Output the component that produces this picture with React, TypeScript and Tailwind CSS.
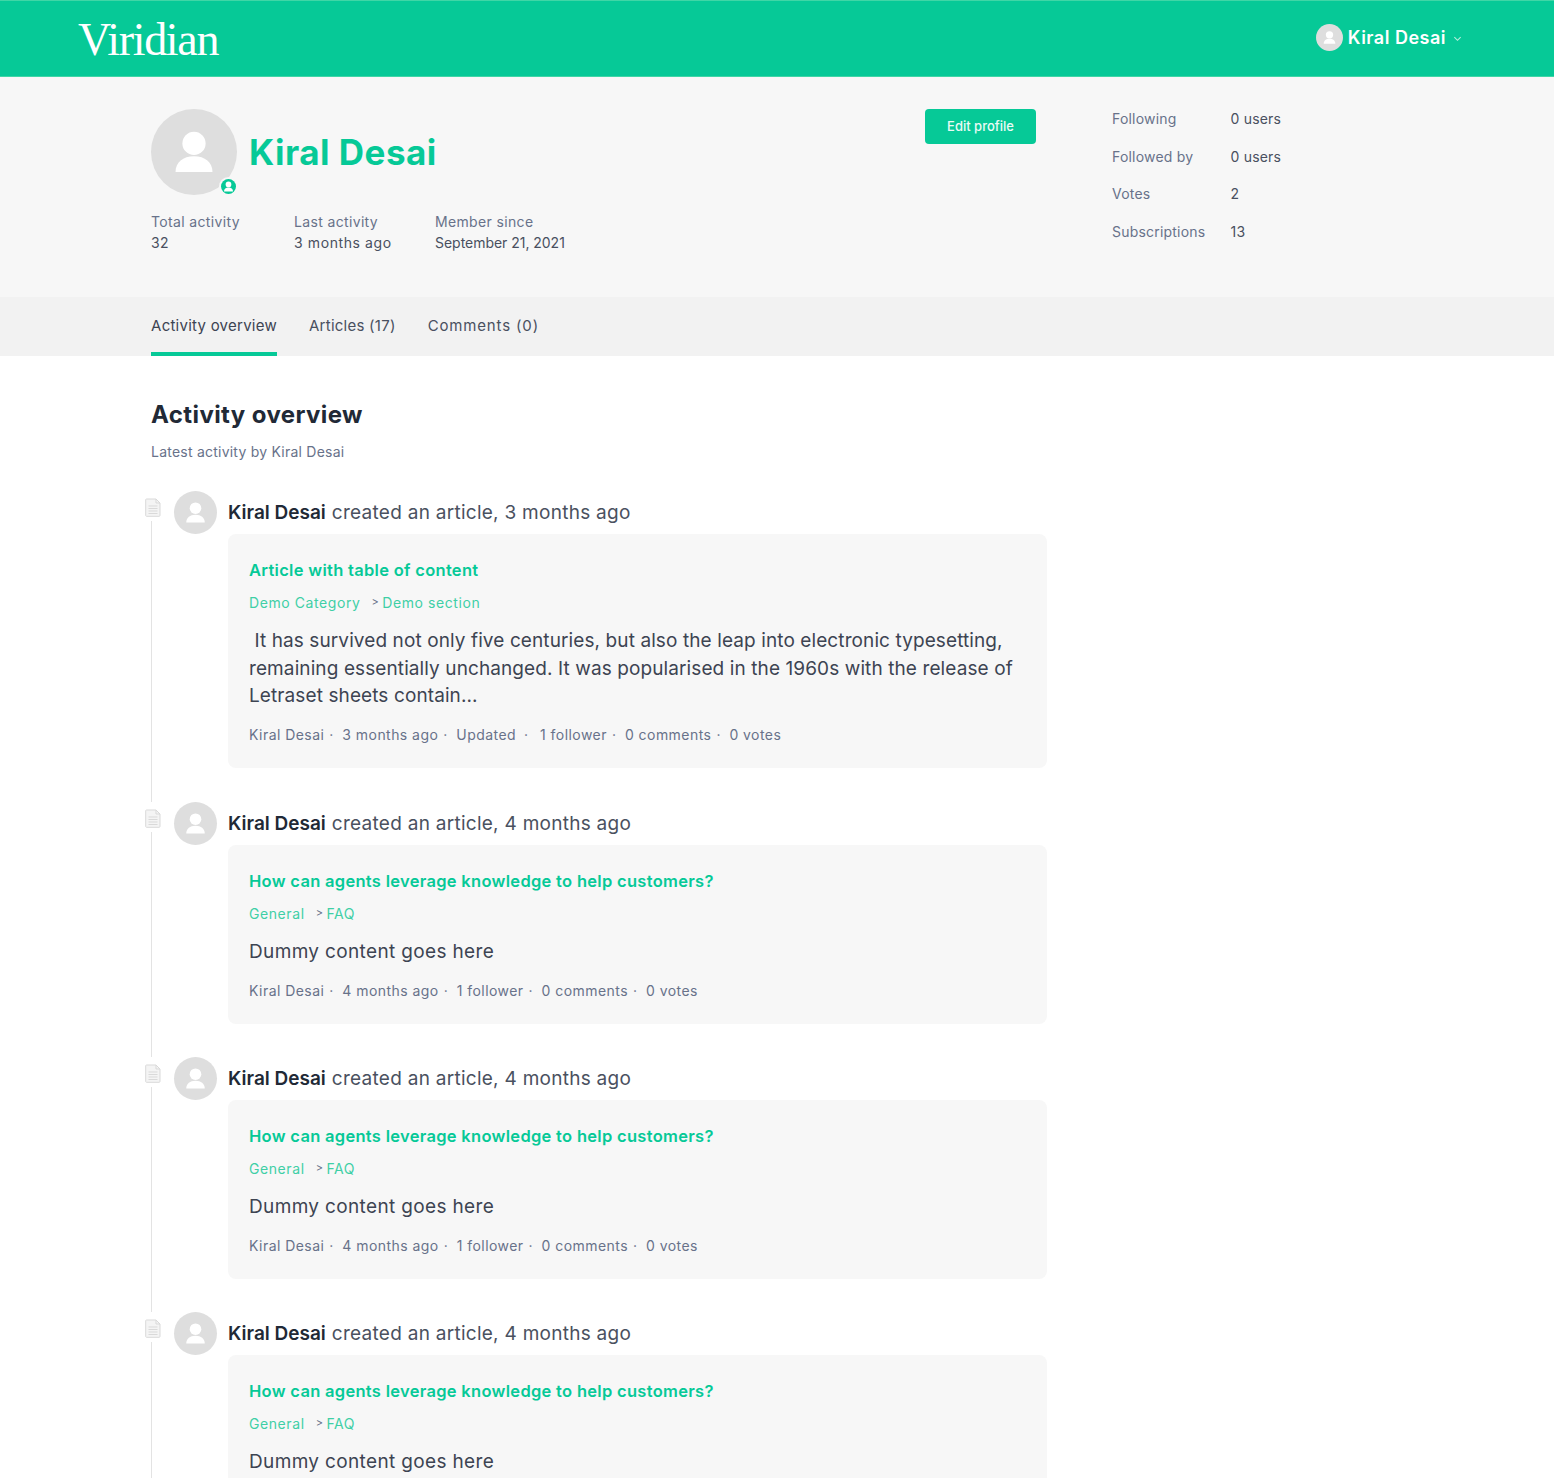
import * as React from "react";

const sans = "font-['Inter','Open_Sans',sans-serif]";

function Person({ className }: { className?: string }) {
  return (
    <svg viewBox="0 0 40 40" className={className} fill="currentColor">
      <circle cx="20" cy="16" r="5.400" />
      <path d="M11.400 29.300c0-4.500 3.500-7.300 8.600-7.300s8.600 2.800 8.600 7.300z" />
    </svg>
  );
}

function DocIcon() {
  return (
    <svg viewBox="0 0 16 19" className="ml-[1px] h-[19px] w-[16px]" fill="none" stroke="#d9d9d9" strokeWidth="1">
      <path d="M1.500 1h9.500l4 4v12.500a.8.8 0 0 1-.8.8H1.500a.8.8 0 0 1-.8-.8V1.800a.8.8 0 0 1 .8-.8z" fill="#f4f4f4" />
      <path d="M11 1v4h4M3.500 8h9M3.500 10.500h9M3.500 13h9M3.500 15.500h9" />
    </svg>
  );
}

interface Activity {
  when: string;
  title: string;
  crumbs: [string, string];
  body: React.ReactNode;
  bodyClass: string;
  meta: string[];
  rowClass: string;
}

const faqMeta = ["Kiral Desai", "4 months ago", "1 follower", "0 comments", "0 votes"];

const activities: Activity[] = [
  {
    when: "3 months ago",
    title: "Article with table of content",
    crumbs: ["Demo Category", "Demo section"],
    body: (
      <>
        &nbsp;It has survived not only five centuries, but also the leap into electronic typesetting,
        remaining essentially unchanged. It was popularised in the 1960s with the release of Letraset
        sheets contain...
      </>
    ),
    bodyClass: "tracking-[0.1px]",
    meta: ["Kiral Desai", "3 months ago", "Updated", "1 follower", "0 comments", "0 votes"],
    rowClass: "h-[311px]",
  },
  {
    when: "4 months ago",
    title: "How can agents leverage knowledge to help customers?",
    crumbs: ["General", "FAQ"],
    body: "Dummy content goes here",
    bodyClass: "tracking-[0.35px]",
    meta: faqMeta,
    rowClass: "h-[255px]",
  },
  {
    when: "4 months ago",
    title: "How can agents leverage knowledge to help customers?",
    crumbs: ["General", "FAQ"],
    body: "Dummy content goes here",
    bodyClass: "tracking-[0.35px]",
    meta: faqMeta,
    rowClass: "h-[255px]",
  },
  {
    when: "4 months ago",
    title: "How can agents leverage knowledge to help customers?",
    crumbs: ["General", "FAQ"],
    body: "Dummy content goes here",
    bodyClass: "tracking-[0.35px]",
    meta: [], // falls below the fold
    rowClass: "h-[255px]",
  },
];

const stats = [
  ["Following", "0 users"],
  ["Followed by", "0 users"],
  ["Votes", "2"],
  ["Subscriptions", "13"],
];

const summary = [
  { label: "Total activity", value: "32", cls: "w-[143px]", valueCls: "" },
  { label: "Last activity", value: "3 months ago", cls: "w-[141px]", valueCls: "tracking-[0.6px]" },
  { label: "Member since", value: "September 21, 2021", cls: "", valueCls: "tracking-[-0.03px]" },
];

export default function App() {
  return (
    <div className={`h-[1478px] overflow-hidden bg-white ${sans}`}>
      {/* Header */}
      <header className="flex h-[77px] items-center justify-between border-y border-t-[#3fd6a6] border-b-[#3fd6a6] bg-[#06c997] pl-[78px] pr-[92px]">
        <span className="mt-[3px] font-['Liberation_Serif',serif] text-[46px] leading-none tracking-[-1.300px] text-white">
          Viridian
        </span>
        <div className="mb-[2px] flex items-center">
          <span className="flex h-[27px] w-[27px] items-center justify-center rounded-full bg-[#dedede] text-white">
            <Person className="h-[27px] w-[27px]" />
          </span>
          <span className="ml-[5px] text-[18px] font-semibold tracking-[0.5px] text-white">Kiral Desai</span>
          <svg viewBox="0 0 10 10" className="ml-[7px] mt-[2px] h-[9px] w-[9px]" fill="none" stroke="#b9efdd" strokeWidth="1.200">
            <path d="M1.500 3.500 5 7l3.500-3.500" />
          </svg>
        </div>
      </header>

      {/* Profile */}
      <section className="flex h-[220px] bg-[#f7f7f7] pl-[151px]">
        <div className="w-[774px] pt-[32px]">
          <div className="flex items-center">
            <div className="relative h-[86px] w-[86px] rounded-full bg-[#dedede] text-white">
              <Person className="h-[86px] w-[86px]" />
              <span className="absolute bottom-[1px] right-[1px] flex h-[15px] w-[15px] items-center justify-center rounded-full bg-[#06c997] ring-2 ring-[#f7f7f7]">
                <Person className="h-[21px] w-[21px] shrink-0" />
              </span>
            </div>
            <h1 className="ml-[12px] text-[35px] font-bold tracking-[0.5px] text-[#06c997]">Kiral Desai</h1>
          </div>
          <div className="mt-[16px] flex text-[14px] leading-[21px] tracking-[0.35px]">
            {summary.map((s) => (
              <div key={s.label} className={s.cls}>
                <div className="text-[#68728a]">{s.label}</div>
                <div className={`text-[#49505f] ${s.valueCls}`}>{s.value}</div>
              </div>
            ))}
          </div>
        </div>
        <div className="w-[187px] pt-[32px]">
          <button className="flex h-[35px] w-[111px] items-center justify-center rounded-[4px] bg-[#06c997] text-[13px] font-medium text-[#eafbf6]">
            Edit profile
          </button>
        </div>
        <div className="grid grid-cols-[118.500px_auto] content-start gap-y-[16.700px] pt-[31px] text-[14px] leading-[21px] tracking-[0.2px]">
          {stats.map(([k, v]) => (
            <React.Fragment key={k}>
              <span className="text-[#68728a]">{k}</span>
              <span className="text-[#49505f]">{v}</span>
            </React.Fragment>
          ))}
        </div>
      </section>

      {/* Tabs */}
      <nav className="flex h-[59px] gap-[32px] bg-[#f2f2f2] pl-[151px] text-[15px] text-[#49505f]">
        <a className="flex w-[126px] items-center justify-center whitespace-nowrap border-b-[4px] border-[#06c997] pt-[3px] tracking-[0.25px] text-[#3d4452]">
          Activity overview
        </a>
        <a className="flex items-center pb-[1px] tracking-[0.25px]">Articles (17)</a>
        <a className="flex items-center pb-[1px] tracking-[0.85px]">Comments (0)</a>
      </nav>

      {/* Overview */}
      <main className="pl-[144px] pt-[43px]">
        <div className="pl-[7px]">
          <h2 className="text-[24px] font-bold leading-[32px] tracking-[0.4px] text-[#212936]">Activity overview</h2>
          <p className="mt-[10px] text-[14px] leading-[21px] tracking-[0.23px] text-[#68728a]">Latest activity by Kiral Desai</p>
        </div>
        <div className="mt-[29px] flex flex-col">
          {activities.map((a, i) => (
            <article key={i} className={`flex ${a.rowClass}`}>
              <div className="flex w-[17px] flex-col items-start pt-[7px]">
                <DocIcon />
                <div className="ml-[7px] mt-[4px] w-px flex-1 bg-[#e3e3e3]" />
              </div>
              <div className="ml-[13px] flex h-[43px] w-[43px] shrink-0 items-center justify-center rounded-full bg-[#dedede] text-white">
                <Person className="h-[43px] w-[43px]" />
              </div>
              <div className="ml-[11px] w-[819px]">
                <div className="flex h-[43px] items-center whitespace-pre pt-[2px] text-[19px] tracking-[0.27px] text-[#4a5160]">
                  <span className="mr-[6px] font-semibold tracking-normal text-[#212936]">Kiral Desai</span>created an article, {a.when}
                </div>
                <div className="rounded-[8px] bg-[#f7f7f7] px-[21px] pb-[23px] pt-[25px]">
                  <h3 className="text-[16.500px] font-semibold leading-[22px] tracking-[0.3px] text-[#06c997]">{a.title}</h3>
                  <div className="mt-[11px] flex items-center text-[14px] leading-[21px] tracking-[0.58px] text-[#3fcfa6]">
                    <span>{a.crumbs[0]}</span>
                    <span className="ml-[11px] mr-[3px] text-[11px] text-[#68728a]">&gt;</span>
                    <span>{a.crumbs[1]}</span>
                  </div>
                  <p className={`mt-[14px] text-[19px] leading-[27.500px] text-[#3d4452] ${a.bodyClass}`}>{a.body}</p>
                  {a.meta.length > 0 && (
                    <div className="mt-[14px] flex text-[14px] leading-[21px] tracking-[0.45px] text-[#68728a]">
                      {a.meta.map((m, j) => (
                        <span key={m} className="flex">
                          {m}
                          {j < a.meta.length - 1 && (
                            <span className={m === "Updated" ? "ml-[8px] mr-[8px] w-[8px]" : "mx-[5px] w-[8px]"}>·</span>
                          )}
                        </span>
                      ))}
                    </div>
                  )}
                </div>
              </div>
            </article>
          ))}
        </div>
      </main>
    </div>
  );
}
